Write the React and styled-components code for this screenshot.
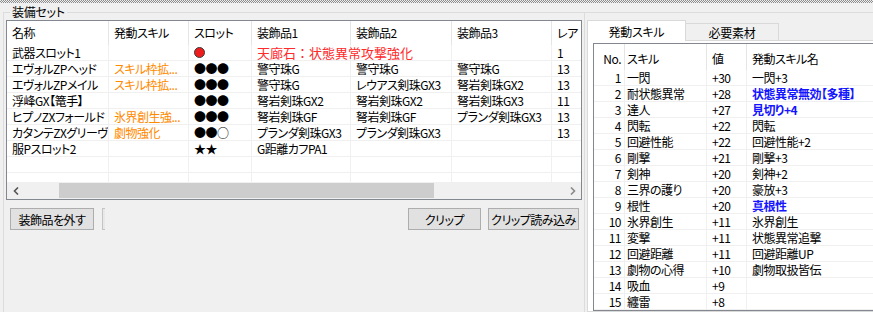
import React from "react";
import styled, { createGlobalStyle } from "styled-components";

const GlobalStyle = createGlobalStyle`
html, body {
    margin: 0;
    padding: 0;
    background: #f0f0f0;
}
body {
    font-family: "Noto Sans CJK JP", "Noto Sans", sans-serif;
    font-size: 12px;
    color: #000;
    font-feature-settings: "palt";
}
`

const Window = styled.div`
width: 873px;
height: 312px;
overflow: hidden;
display: flex;
flex-direction: column;
background: #f0f0f0;
`

const Splitter = styled.div`
height: 3px;
flex: none;
background: repeating-conic-gradient(#8c8c8c 0 25%, #f0f0f0 0 50%) 0 0 / 2px 2px;
`

const Panes = styled.div`
flex: 1;
display: flex;
min-height: 0;
`

const GroupBox = styled.fieldset`
margin: 1px 0 0 3px;
padding: 0 2px;
width: 582px;
height: 340px;
box-sizing: border-box;
border: 1px solid #dcdcdc;
flex: none;
min-width: 0;
`

const Legend = styled.legend`
margin-left: 4px;
padding: 0 2px;
line-height: 16px;
letter-spacing: -0.3px;
`

const ListView = styled.div`
height: ${props => props.$height ? props.$height + "px" : "auto"};
flex: ${props => props.$height ? "none" : "1"};
box-sizing: border-box;
border: 1px solid #828790;
border-right-width: ${props => props.$open ? 0 : 1}px;
background: #fff;
display: flex;
flex-direction: column;
overflow: hidden;
`

const Rows = styled.div`
flex: 1;
min-height: 0;
overflow: hidden;
`

const Row = styled.div`
display: grid;
grid-template-columns: ${props => props.$cols};
height: ${props => props.$head ? props.$head : 16}px;
box-sizing: border-box;
border-bottom: ${props => props.$head ? "none" : "1px solid #f0f0f0"};
`

const Cell = styled.div`
box-sizing: border-box;
padding: ${props => props.$top || 0}px ${props => props.$pr || 0}px 0 ${props => props.$pl ?? 5}px;
border-right: 1px solid ${props => props.$head ? "#e5e5e5" : "#f0f0f0"};
line-height: ${props => props.$lh || 15}px;
white-space: nowrap;
overflow: ${props => props.$spill ? "visible" : "hidden"};
text-align: ${props => props.$right ? "right" : "left"};
color: ${props => props.$color || "#000"};
font-weight: ${props => props.$bold ? 700 : 400};
font-size: ${props => props.$size || 12}px;
letter-spacing: ${props => props.$spill ? 0 : -0.5}px;
font-feature-settings: ${props => props.$spill ? "normal" : "\"palt\""};
position: ${props => props.$spill ? "relative" : "static"};
z-index: ${props => props.$spill ? 1 : "auto"};
`

const RedSlot = styled.span`
display: inline-block;
width: 11px;
height: 11px;
margin-top: 2px;
border-radius: 50%;
background: #ee1c1c;
border: 1px solid #3a3a3a;
box-sizing: border-box;
vertical-align: top;
`

const HScroll = styled.div`
height: 17px;
flex: none;
display: flex;
background: #f0f0f0;
`

const ScrollArrow = styled.div`
width: 17px;
height: 17px;
flex: none;
display: flex;
align-items: center;
justify-content: center;
`

const Track = styled.div`
flex: 1;
display: flex;
align-items: center;
`

const Thumb = styled.div`
height: 15px;
width: 375px;
margin-left: 35px;
background: #cdcdcd;
`

const ButtonBar = styled.div`
display: flex;
align-items: center;
margin-top: 8px;
padding: 0 3px 0 4px;
`

const Button = styled.button`
height: 22px;
width: ${props => props.$w}px;
margin-left: ${props => props.$ml || 0}px;
padding: 0;
box-sizing: border-box;
border: 1px solid #adadad;
background: #e1e1e1;
font-family: inherit;
font-size: 12px;
letter-spacing: -0.5px;
color: #000;
font-feature-settings: "palt";
`

const Stub = styled.div`
width: 3px;
height: 22px;
margin-left: 8px;
box-sizing: border-box;
border: 1px solid #c4c4c4;
border-right: none;
background: #e8e8e8;
`

const Spacer = styled.div`
flex: 1;
`

const RightPane = styled.div`
flex: 1;
min-width: 0;
margin-top: 9px;
border-top: 1px solid #dcdcdc;
padding: 7px 0 0 2px;
display: flex;
flex-direction: column;
`

const TabStrip = styled.div`
display: flex;
align-items: flex-end;
height: 20px;
flex: none;
`

const Tab = styled.div`
height: ${props => props.$active ? 21 : 17}px;
width: ${props => props.$w}px;
margin-left: ${props => props.$active ? 0 : -1}px;
margin-bottom: ${props => props.$active ? -1 : 0}px;
box-sizing: border-box;
border: 1px solid #d9d9d9;
border-bottom: none;
background: ${props => props.$active ? "#fff" : "#f0f0f0"};
display: flex;
align-items: center;
justify-content: center;
letter-spacing: -0.3px;
position: relative;
z-index: ${props => props.$active ? 1 : 0};
`

const TabPage = styled.div`
flex: 1;
min-height: 0;
border: 1px solid #d9d9d9;
border-right: none;
background: #fff;
padding: 2px 0 0 5px;
display: flex;
flex-direction: column;
`

const ORANGE = "#ff8a00";
const RED = "#ff2a2a";
const BLUE = "#1414ff";

const setCols = "102px 80px 63px 99px 101px 100px 40px";
const setHeaders = ["名称", "発動スキル", "スロット", "装飾品1", "装飾品2", "装飾品3", "レア"];

const setRows = [
    { name: "武器スロット1", skill: "", slot: "red", d1: "天廊石：状態異常攻撃強化", d2: "", d3: "", rare: "1", spill: true },
    { name: "エヴォルZPヘッド", skill: "スキル枠拡...", slot: "●●●", d1: "警守珠G", d2: "警守珠G", d3: "警守珠G", rare: "13" },
    { name: "エヴォルZPメイル", skill: "スキル枠拡...", slot: "●●●", d1: "警守珠G", d2: "レウアス剣珠GX3", d3: "弩岩剣珠GX2", rare: "13" },
    { name: "浮峰GX【篭手】", skill: "", slot: "●●●", d1: "弩岩剣珠GX2", d2: "弩岩剣珠GX2", d3: "弩岩剣珠GX3", rare: "11" },
    { name: "ヒプノZXフォールド", skill: "氷界創生強...", slot: "●●●", d1: "弩岩剣珠GF", d2: "弩岩剣珠GF", d3: "プランダ剣珠GX3", rare: "13" },
    { name: "カタンテZXグリーヴ", skill: "劇物強化", slot: "●●○", d1: "プランダ剣珠GX3", d2: "プランダ剣珠GX3", d3: "", rare: "13" },
    { name: "服Pスロット2", skill: "", slot: "★★", d1: "G距離カフPA1", d2: "", d3: "", rare: "" },
    { name: "", skill: "", slot: "", d1: "", d2: "", d3: "", rare: "" },
    { name: "", skill: "", slot: "", d1: "", d2: "", d3: "", rare: "" },
];

const skillCols = "31px 82px 40px 200px";

const skills = [
    ["1", "一閃", "+30", "一閃+3"],
    ["2", "耐状態異常", "+28", "状態異常無効【多種】", true],
    ["3", "達人", "+27", "見切り+4", true],
    ["4", "閃転", "+22", "閃転"],
    ["5", "回避性能", "+22", "回避性能+2"],
    ["6", "剛撃", "+21", "剛撃+3"],
    ["7", "剣神", "+20", "剣神+2"],
    ["8", "三界の護り", "+20", "豪放+3"],
    ["9", "根性", "+20", "真根性", true],
    ["10", "氷界創生", "+11", "氷界創生"],
    ["11", "変撃", "+11", "状態異常追撃"],
    ["12", "回避距離", "+11", "回避距離UP"],
    ["13", "劇物の心得", "+10", "劇物取扱皆伝"],
    ["14", "吸血", "+9", ""],
    ["15", "纏雷", "+8", ""],
    ["", "", "", ""],
    ["", "", "", ""],
];

const Chevron = ({ dir, color }) => (
    <svg width="6" height="8" viewBox="0 0 6 8">
        <path
            d={dir === "left" ? "M5 0.5 L1.5 4 L5 7.5" : "M1 0.5 L4.5 4 L1 7.5"}
            fill="none"
            stroke={color}
            strokeWidth="1.6"
        />
    </svg>
)

const App = () => {
    return (
        <Window>
            <GlobalStyle />
            <Splitter />
            <Panes>
                <GroupBox>
                    <Legend>装備セット</Legend>

                    <ListView $height={180}>
                        <Row $cols={setCols} $head={24}>
                            {setHeaders.map(h => (
                                <Cell key={h} $head $lh={24}>{h}</Cell>
                            ))}
                        </Row>
                        <Rows>
                            {setRows.map((r, i) => (
                                <Row key={i} $cols={setCols}>
                                    <Cell>{r.name}</Cell>
                                    <Cell $color={ORANGE}>{r.skill}</Cell>
                                    <Cell>{r.slot === "red" ? <RedSlot /> : r.slot}</Cell>
                                    {r.spill ? (
                                        <Cell $spill $color={RED} $size={13}>{r.d1}</Cell>
                                    ) : (
                                        <Cell>{r.d1}</Cell>
                                    )}
                                    <Cell>{r.d2}</Cell>
                                    <Cell>{r.d3}</Cell>
                                    <Cell>{r.rare}</Cell>
                                </Row>
                            ))}
                        </Rows>
                        <HScroll>
                            <ScrollArrow><Chevron dir="left" color="#555" /></ScrollArrow>
                            <Track><Thumb /></Track>
                            <ScrollArrow><Chevron dir="right" color="#8a8a8a" /></ScrollArrow>
                        </HScroll>
                    </ListView>

                    <ButtonBar>
                        <Button $w={84}>装飾品を外す</Button>
                        <Stub />
                        <Spacer />
                        <Button $w={73}>クリップ</Button>
                        <Button $w={91} $ml={7}>クリップ読み込み</Button>
                    </ButtonBar>
                </GroupBox>

                <RightPane>
                    <TabStrip>
                        <Tab $active $w={99}>発動スキル</Tab>
                        <Tab $w={94}>必要素材</Tab>
                    </TabStrip>
                    <TabPage>
                        <ListView $open>
                            <Row $cols={skillCols} $head={26}>
                                <Cell $head $right $pl={0} $pr={3} $top={4} $lh={22}>No.</Cell>
                                <Cell $head $pl={2} $top={4} $lh={22}>スキル</Cell>
                                <Cell $head $top={4} $lh={22}>値</Cell>
                                <Cell $head $top={4} $lh={22}>発動スキル名</Cell>
                            </Row>
                            <Rows>
                                {skills.map((s, i) => (
                                    <Row key={i} $cols={skillCols}>
                                        <Cell $right $pl={0} $pr={3}>{s[0]}</Cell>
                                        <Cell $pl={2}>{s[1]}</Cell>
                                        <Cell>{s[2]}</Cell>
                                        <Cell $bold={s[4]} $color={s[4] ? BLUE : "#000"}>{s[3]}</Cell>
                                    </Row>
                                ))}
                            </Rows>
                        </ListView>
                    </TabPage>
                </RightPane>
            </Panes>
        </Window>
    )
}

export default App;
